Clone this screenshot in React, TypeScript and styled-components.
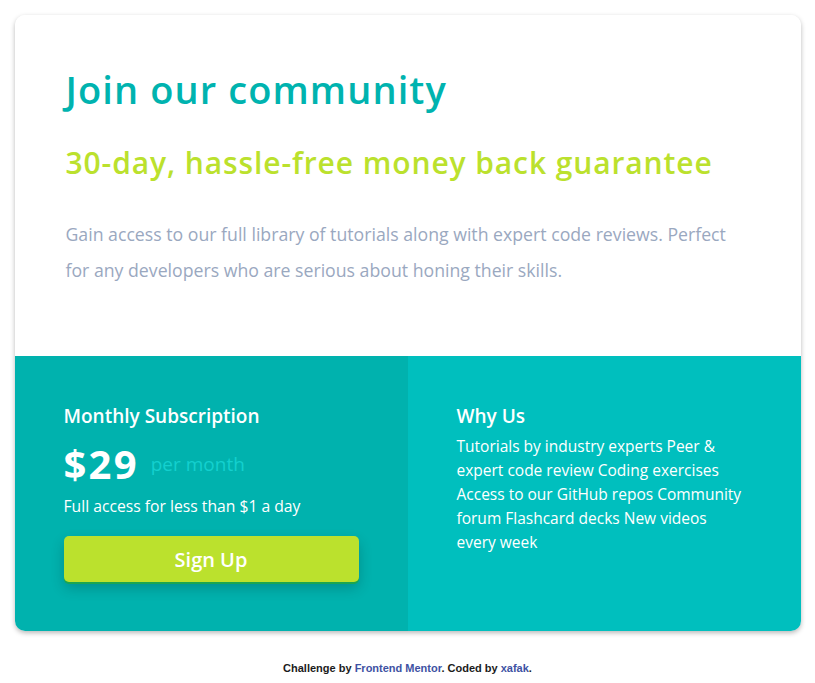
import React from "react";
import styled, { createGlobalStyle } from "styled-components";

const Global = createGlobalStyle`
  * { box-sizing: border-box; }
  body {
    margin: 0;
    background: #ffffff;
    font-family: "Open Sans", "Noto Sans", sans-serif;
  }
`;

const Page = styled.main`
  display: flex;
  flex-direction: column;
  align-items: center;
  padding-top: 15px;
`;

const Card = styled.section`
  width: 786px;
  border-radius: 10px;
  box-shadow: 0 2px 5px rgba(0, 0, 0, 0.28);
  overflow: hidden;
  display: flex;
  flex-direction: column;
`;

const Top = styled.div`
  background: #ffffff;
  height: 341px;
  padding: 52px 51px 0;
`;

const Title = styled.h1`
  margin: 0;
  font-size: 38px;
  font-weight: 600;
  letter-spacing: 1.1px;
  color: #00b3af;
  line-height: 44px;
`;

const Subtitle = styled.h2`
  margin: 34px 0 0;
  font-size: 30px;
  font-weight: 600;
  letter-spacing: 0.9px;
  color: #bbe12d;
  line-height: 36px;
`;

const Lead = styled.p`
  margin: 35px 0 0;
  font-size: 17.7px;
  line-height: 36px;
  color: #9aa8bf;
`;

const Bottom = styled.div`
  display: grid;
  grid-template-columns: 393px 393px;
  height: 275px;
`;

const Panel = styled.div<{ $tone: "dark" | "light" }>`
  background: ${(p) => (p.$tone === "dark" ? "#00b2ae" : "#00bfbe")};
  color: #ffffff;
  padding: 46px 49px 0;
  display: flex;
  flex-direction: column;
`;

const PanelTitle = styled.h3`
  margin: 0;
  font-size: 19px;
  font-weight: 600;
  line-height: 28px;
`;

const PriceRow = styled.div`
  display: flex;
  align-items: center;
  gap: 12px;
  margin-top: 10px;
`;

const Price = styled.span`
  font-size: 40px;
  font-weight: 700;
  letter-spacing: 2.2px;
  line-height: 48px;
`;

const Per = styled.span`
  font-size: 19px;
  line-height: 24px;
  color: #14d0ce;
`;

const Note = styled.p`
  margin: 6px 0 0;
  font-size: 15.7px;
  line-height: 24px;
`;

const SignUp = styled.button`
  margin-top: 18px;
  width: 295px;
  height: 46px;
  border: none;
  border-radius: 5px;
  background: #bbe12d;
  color: #ffffff;
  font-family: inherit;
  font-size: 20px;
  font-weight: 600;
  box-shadow: 0 2px 0 #1aa651, 0 6px 14px rgba(0, 0, 0, 0.2);
  cursor: pointer;
`;

const Features = styled.p`
  margin: 4px 0 0;
  font-size: 15.5px;
  line-height: 24px;
  max-width: 290px;
`;

const Footer = styled.footer`
  margin-top: 31px;
  font-family: "Liberation Sans", sans-serif;
  font-size: 11px;
  font-weight: 700;
  color: #1b1b1b;
  text-align: center;
`;

const Link = styled.a`
  color: #3e52a3;
  text-decoration: none;
`;

export default function App() {
  return (
    <>
      <Global />
      <Page>
        <Card>
          <Top>
            <Title>Join our community</Title>
            <Subtitle>30-day, hassle-free money back guarantee</Subtitle>
            <Lead>
              Gain access to our full library of tutorials along with expert code reviews. Perfect for any
              developers who are serious about honing their skills.
            </Lead>
          </Top>
          <Bottom>
            <Panel $tone="dark">
              <PanelTitle>Monthly Subscription</PanelTitle>
              <PriceRow>
                <Price>$29</Price>
                <Per>per month</Per>
              </PriceRow>
              <Note>Full access for less than $1 a day</Note>
              <div>
                <SignUp>Sign Up</SignUp>
              </div>
            </Panel>
            <Panel $tone="light">
              <PanelTitle>Why Us</PanelTitle>
              <Features>
                Tutorials by industry experts Peer &amp; expert code review Coding exercises Access to our GitHub
                repos Community forum Flashcard decks New videos every week
              </Features>
            </Panel>
          </Bottom>
        </Card>
        <Footer>
          Challenge by <Link href="#">Frontend Mentor</Link>. Coded by <Link href="#">xafak</Link>.
        </Footer>
      </Page>
    </>
  );
}
